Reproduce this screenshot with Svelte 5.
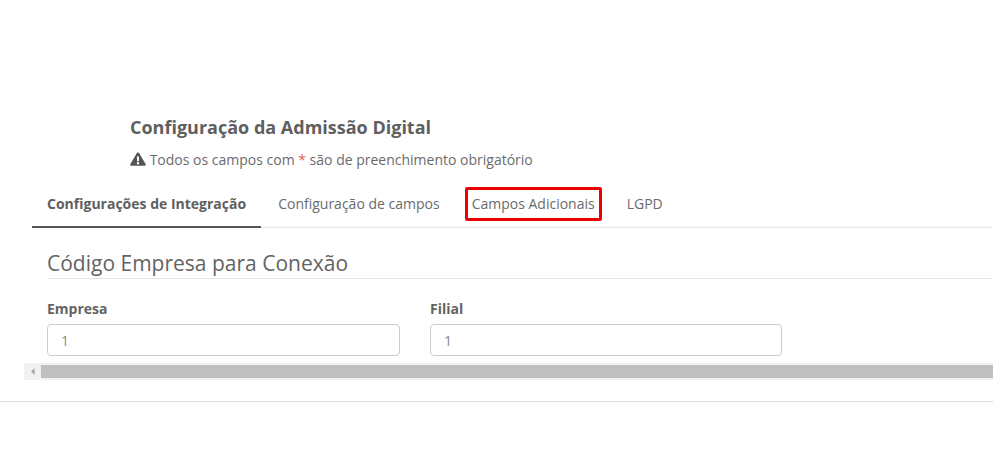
<script>
  const tabs = [
    { label: 'Configurações de Integração', cls: 'active' },
    { label: 'Configuração de campos', cls: '' },
    { label: 'Campos Adicionais', cls: 'marked' },
    { label: 'LGPD', cls: '' }
  ];
  const fields = [
    { label: 'Empresa', value: '1', cls: 'first' },
    { label: 'Filial', value: '1', cls: 'second' }
  ];
</script>

<div class="page">
  <header class="head">
    <h1>Configuração da Admissão Digital</h1>
    <p class="note"><svg class="warn" viewBox="0 0 16 14" aria-hidden="true"><path d="M8 .4c.5 0 .9.3 1.1.7l6.500 11c.5.8-.1 1.700-1 1.700H1.400c-.9 0-1.500-.9-1-1.700l6.500-11C7.100.7 7.500.4 8 .4zM6.900 4.400l.2 4.800h1.800l.2-4.800H6.900zM8 10.100a1.200 1.200 0 1 0 0 2.400 1.200 1.200 0 0 0 0-2.400z" fill-rule="evenodd"/></svg> Todos os campos com <span class="req">*</span> são de preenchimento obrigatório</p>
  </header>

  <div class="panel">
    <nav class="tabs">
      {#each tabs as t}
        <div class="tab {t.cls}"><span>{t.label}</span></div>
      {/each}
    </nav>

    <section class="content">
      <h2>Código Empresa para Conexão</h2>
      <div class="fields">
        {#each fields as f}
          <div class="field {f.cls}">
            <label for={f.cls}>{f.label}</label>
            <input id={f.cls} value={f.value} />
          </div>
        {/each}
      </div>
    </section>
  </div>

  <div class="scrollbar">
    <div class="arrow"><svg viewBox="0 0 5 8" aria-hidden="true"><path d="M4.500 0v8L0 4z"/></svg></div>
    <div class="thumb"></div>
  </div>

  <div class="rule"></div>
</div>

<style>
  :global(body) {
    margin: 0;
    background: #fff;
    overflow: hidden;
  }
  .page {
    width: 993px;
    height: 466px;
    overflow: hidden;
    font-family: "Open Sans", sans-serif;
    color: #5c5c5c;
    padding-top: 115px;
    box-sizing: border-box;
  }
  .head {
    padding-left: 130px;
  }
  h1 {
    margin: 0;
    font-size: 18px;
    line-height: 24px;
    font-weight: 700;
    color: #5f5f5f;
  }
  .note {
    margin: 11px 0 0;
    font-size: 14px;
    line-height: 20px;
    color: #6b6b6b;
  }
  .warn {
    width: 16px;
    height: 14px;
    fill: #555;
    vertical-align: -1px;
  }
  .req {
    color: #e8605a;
  }
  .panel {
    margin-left: 32px;
  }
  .tabs {
    display: flex;
    margin-top: 13px;
    border-bottom: 1px solid #e6e6e6;
    height: 44px;
  }
  .tab {
    padding: 0 15px 2px;
    margin-right: 2px;
    font-size: 14px;
    line-height: 20px;
    display: flex;
    align-items: center;
    height: 44px;
    color: #6b6b6b;
    box-sizing: border-box;
  }
  .tab.active {
    font-weight: 700;
    color: #5f5f5f;
    border-bottom: 2px solid #555;
    height: 45px;
    padding-bottom: 1px;
  }
  .tab span {
    white-space: nowrap;
  }
  .tab.marked {
    padding: 0 0 2px;
    margin: 0 10px 0 8px;
  }
  .tab.marked span {
    border: 3px solid #ee0000;
    border-radius: 2px;
    padding: 4px 4px 4px 4px;
  }
  .content {
    padding: 0 0 0 15px;
  }
  h2 {
    margin: 0;
    padding: 20px 0 0;
    height: 30px;
    font-size: 21px;
    line-height: 30px;
    font-weight: 400;
    color: #636363;
    border-bottom: 1px solid #e6e6e6;
  }
  .fields {
    display: flex;
    margin-top: 20px;
  }
  .field {
    display: flex;
    flex-direction: column;
  }
  .field.first {
    width: 353px;
    margin-right: 30px;
  }
  .field.second {
    width: 352px;
  }
  label {
    font-size: 14px;
    line-height: 20px;
    font-weight: 700;
    color: #636363;
    margin-bottom: 5px;
  }
  input {
    height: 32px;
    box-sizing: border-box;
    border: 1px solid #ccc;
    border-radius: 4px;
    padding: 0 13px;
    font: 14px/20px "Open Sans", sans-serif;
    color: #888;
    background: #fff;
    outline: none;
    width: 100%;
  }
  .scrollbar {
    margin: 7px 0 0 24px;
    height: 17px;
    background: #f1f1f1;
    display: flex;
    align-items: center;
  }
  .arrow {
    width: 17px;
    height: 13px;
    display: flex;
    align-items: center;
    justify-content: center;
  }
  .arrow svg {
    width: 4px;
    height: 7px;
    fill: #a3a3a3;
  }
  .thumb {
    flex: 1;
    height: 13px;
    background: #c0c0c0;
  }
  .rule {
    margin-top: 21px;
    height: 1px;
    background: #dcdcdc;
  }
</style>
